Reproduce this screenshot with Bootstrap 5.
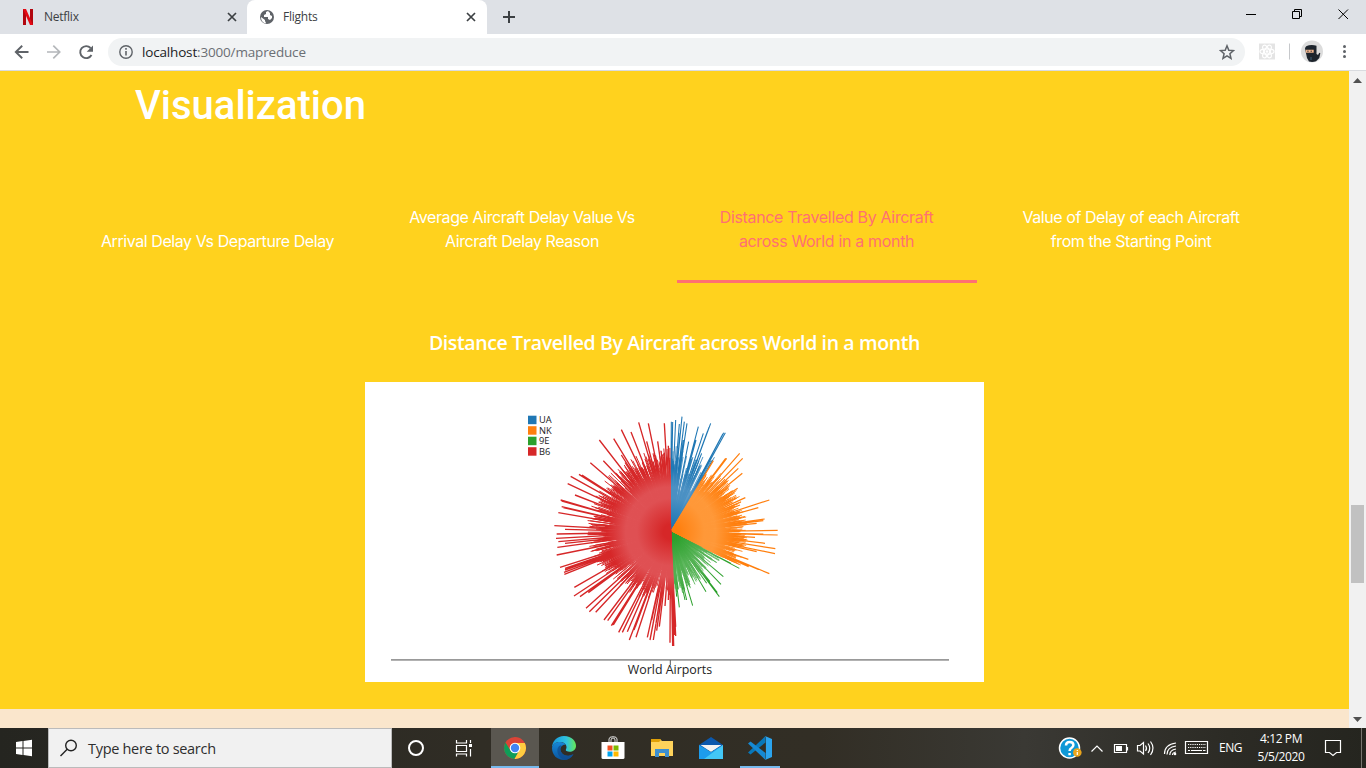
<!DOCTYPE html>
<html lang="en">
<head>
<meta charset="utf-8">
<meta name="viewport" content="width=device-width, initial-scale=1">
<title>Flights</title>
<link rel="stylesheet" href="https://cdn.jsdelivr.net/npm/bootstrap@5.3.0/dist/css/bootstrap.min.css">
<style>
  body { height: 768px; overflow: hidden; font-family: "Open Sans", "Noto Sans", sans-serif; font-size: 12px; color: #3c4043; }
  svg { display: block; flex: none; }
  .strip { height: 34px; background: #dee1e6; }
  .tab { width: 247px; height: 34px; padding: 0 9px 0 20px; line-height: 34px; }
  .tab.on { width: 240px; background: #fff; border-radius: 8px 8px 0 0; padding: 0 10px 0 12px; }
  .tab span { font-size: 12px; letter-spacing: -.25px; }
  .win svg { width: 46px; height: 29px; }
  .tools { height: 37px; background: #fff; border-bottom: 1px solid #d9dbdf; padding-bottom: 1px; }
  .omni { width: 1137px; height: 28px; margin-left: 12px; border-radius: 14px; background: #f1f3f4; padding: 0 10px; color: #6b6f74; font-size: 13.5px; letter-spacing: -.17px; }
  .omni div { padding-top: 1px; }
  .omni b { font-weight: 400; color: #202124; }
  .view { height: 657px; }
  .page { width: 1349px; background: #fae6cc; }
  .sheet { height: 638px; background: #ffd21e; color: #fff; }
  .sheet h1 { font: 500 40px/48px Roboto, sans-serif; margin: 0 0 0 135px; padding-top: 11px; }
  .choices { width: 1218px; margin: 72px 0 0 65px; height: 81px; font: 16px/24px Inter, sans-serif; }
  .choices > div { width: 304.5px; padding: 0 2px 0 2.6px; text-align: center; white-space: nowrap; }
  .choices a { display: block; color: #fff; text-decoration: none; padding-bottom: 27px; border-bottom: 3px solid transparent; letter-spacing: -.43px; }
  .choices a.on { color: #ff7072; border-color: #ff7072; letter-spacing: -.33px; }
  .sheet h2 { font: 600 19.5px/28px "Open Sans", sans-serif; margin: 46px 0 0; letter-spacing: -.38px; }
  .chartbox { width: 619px; height: 300px; margin-top: 25px; background: #fff; }
  .sbar { width: 17px; background: #f1f1f1; padding: 7px 0 6px; }
  .thumb { width: 13px; height: 78px; background: #c1c1c1; margin-top: 422px; }
  .taskbar { height: 40px; background: linear-gradient(90deg, #252520, #302d25 35%, #322e25 60%, #3a3934 75%, #2c2b25 90%, #25251f); color: #fff; }
  .start { width: 48px; height: 40px; }
  .find { width: 344px; height: 40px; background: #f1f1f1; border: 1px solid #bbb; color: #2e2e2e; padding-left: 11px; font-size: 14.5px; letter-spacing: -.3px; }
  .find span { margin-left: 10px; padding-top: 2px; }
  .app { width: 49px; height: 40px; padding-bottom: 1px; }
  .app.slim { width: 48px; }
  .app.live { background: #5a5750; width: 48px; margin-left: 3px; }
  .app.live, .app.run { box-shadow: inset 0 -2px #76b9ed; padding: 0; }
  .app.run { width: 40px; margin-left: 5px; }
  .lang { width: 23px; margin-left: 9px; letter-spacing: -.5px; }
  .clock { width: 70px; margin-left: 4px; font-size: 12px; line-height: 18px; letter-spacing: -.4px; }
</style>
</head>
<body class="d-flex flex-column">
<header>
  <div class="strip d-flex">
    <div class="tab d-flex align-items-center">
      <svg width="16" height="16" viewBox="0 0 16 16"><path d="M3 0h3v16H3zM10 0h3v16h-3z" fill="#b1060f"/><path d="M3 0h3l7 16h-3z" fill="#e50914"/></svg>
      <span class="ms-2 me-auto">Netflix</span>
      <svg width="12" height="12"><path d="m2 2 8 8m0-8-8 8" stroke="#3c4043" stroke-width="1.7"/></svg>
    </div>
    <div class="tab on d-flex align-items-center">
      <svg width="16" height="16" viewBox="0 0 16 16"><circle cx="8" cy="8" r="7" fill="#5f6368"/><path d="M9 2 7 3v2L5 6v2h4v2l2 1 2-2V7l-2-1V4l-1-1zM2 8l4 3v1l1 2-1 .5A7 7 0 0 1 2 8z" fill="#fff"/></svg>
      <span class="ms-2 me-auto">Flights</span>
      <svg width="12" height="12"><path d="m2 2 8 8m0-8-8 8" stroke="#3c4043" stroke-width="1.7"/></svg>
    </div>
    <svg class="ms-3" width="12" height="34"><path d="M6 11v12M0 17h12" stroke="#3c4043" stroke-width="2"/></svg>
    <div class="win ms-auto d-flex">
      <svg><path d="M18 14.5h10" stroke="#000"/></svg>
      <svg><path d="M18.500 11.500h7v7h-7zM20.500 11V9.500h7v7H26" fill="none" stroke="#000"/></svg>
      <svg><path d="m18.500 9.500 9.500 9.500m0-9.500-9.500 9.500" stroke="#000"/></svg>
    </div>
  </div>
  <div class="tools d-flex align-items-center">
    <svg width="96" height="34" fill="none" stroke="#5f6368" stroke-width="1.900"><path d="M28.500 17h-13m6.700-6.300L15.800 17l6.400 6.300"/><path d="M47 17h12.500M53.300 10.700 59.700 17l-6.400 6.300" stroke="#b4b7ba" stroke-width="1.700"/><path d="M91.500 20a6 6 0 1 1-.9-7"/><path d="M93 10.500v6.300h-6.300z" fill="#5f6368" stroke="none"/></svg>
    <div class="omni d-flex align-items-center">
      <svg width="16" height="16"><circle cx="8" cy="8" r="6.200" fill="none" stroke="#5f6368" stroke-width="1.400"/><path d="M8 7v4.500M8 4v1.700" stroke="#5f6368" stroke-width="1.600"/></svg>
      <div class="ms-2 me-auto"><b>localhost</b>:3000/mapreduce</div>
      <svg width="16" height="16"><path d="m8 1.800 1.800 4.400 4.700.4-3.600 3.100 1.100 4.600L8 11.800l-4 2.500 1.100-4.600-3.600-3.100 4.700-.4z" fill="none" stroke="#5f6368" stroke-width="1.500"/></svg>
    </div>
    <svg width="121" height="35">
      <path d="M14 9.500h16v16H14z" fill="#e4e4e4"/>
      <g fill="none" stroke="#fff" stroke-width="1.200"><ellipse cx="22" cy="17.500" rx="7" ry="2.700"/><ellipse cx="22" cy="17.500" rx="7" ry="2.700" transform="rotate(60 22 17.500)"/><ellipse cx="22" cy="17.500" rx="7" ry="2.700" transform="rotate(120 22 17.500)"/></g><circle cx="22" cy="17.500" r="1.300" fill="#fff"/>
      <path d="M44.500 9.500v16" stroke="#c6c8cb"/>
      <circle cx="67" cy="17.500" r="11" fill="#dcdcdc"/>
      <path d="M60 14.500q.5-2.700 4-3.300 4-.7 7.500.6V20l1.500 1 1.300-2.300 1 .5-1 4.800-3.300 3.300q-3.500 1.400-7 .3L62 24z" fill="#1d242c"/><path d="M60.700 15.700h8v3h-8z" fill="#efb48d"/><path d="M62.300 17.200h1.300m2 0h1.300" stroke="#20242a"/><path d="M66 23v3" stroke="#3f6079"/>
      <g fill="#5f6368"><circle cx="99.500" cy="12.500" r="1.500"/><circle cx="99.500" cy="17.500" r="1.500"/><circle cx="99.500" cy="22.500" r="1.500"/></g>
    </svg>
  </div>
</header>

<main class="view d-flex">
  <div class="page">
    <section class="sheet">
      <h1>Visualization</h1>
      <nav class="choices d-flex align-items-end">
        <div><a href="#">Arrival Delay Vs Departure Delay</a></div>
        <div><a href="#">Average Aircraft Delay Value Vs<br>Aircraft Delay Reason</a></div>
        <div><a class="on" href="#">Distance Travelled By Aircraft<br>across World in a month</a></div>
        <div><a href="#">Value of Delay of each Aircraft<br>from the Starting Point</a></div>
      </nav>
      <h2 class="text-center">Distance Travelled By Aircraft across World in a month</h2>
      <div class="chartbox mx-auto">
        <svg id="chart" width="619" height="300" viewBox="365 382 619 300">
          <defs></defs>
          <g id="rays" stroke-linecap="butt"></g>
          <path d="M391 659.800h558" stroke="#999" stroke-width="1.700"/><path d="M670.300 660v5" stroke="#555"/>
          <g font-family="Open Sans, sans-serif" fill="#222">
            <g font-size="9.300"><text x="539" y="423">UA</text><text x="539" y="433.700">NK</text><text x="539" y="444.200">9E</text><text x="539" y="454.700">B6</text></g>
            <text x="670" y="674" font-size="12.400" text-anchor="middle">World Airports</text>
          </g>
          <path d="M528 415.700h8.500v8.500H528z" fill="#1f77b4"/><path d="M528 426.200h8.500v8.500H528z" fill="#ff7f0e"/><path d="M528 436.700h8.500v8.500H528z" fill="#2ca02c"/><path d="M528 447.200h8.500v8.500H528z" fill="#d62728"/>
        </svg>
      </div>
    </section>
  </div>
  <div class="sbar d-flex flex-column align-items-center">
    <svg width="9" height="5"><path d="M0 5 4.500 0 9 5z" fill="#505050"/></svg>
    <div class="thumb"></div>
    <svg class="mt-auto" width="9" height="5"><path d="M0 0h9L4.500 5z" fill="#505050"/></svg>
  </div>
</main>

<footer class="taskbar d-flex align-items-center">
  <svg class="start" viewBox="0 0 48 40"><path d="m16 14 6.500-1v6.500H16zM23.500 12.900 32 11.700v7.800h-8.500zM16 20.500h6.500V27L16 26zM23.500 20.500H32v7.800l-8.500-1.200z" fill="#fff"/></svg>
  <div class="find d-flex align-items-center">
    <svg width="18" height="18" fill="none" stroke="#222" stroke-width="1.400"><circle cx="11" cy="6.500" r="5.300"/><path d="m7.200 10.300-6.700 6.700"/></svg>
    <span>Type here to search</span>
  </div>
  <div class="app slim d-flex align-items-center justify-content-center"><svg width="18" height="18"><circle cx="9" cy="9" r="7" fill="none" stroke="#fff" stroke-width="2"/></svg></div>
  <div class="app slim d-flex align-items-center justify-content-center"><svg width="18" height="18" fill="none" stroke="#fff" stroke-width="1.200"><path d="M1.500 1v3h10V1M1.500 6.500h10v6h-10zM1.500 17.500V15h10v2.500M15.500 1v3m0 6v7.500"/><path d="M14 5h3v3h-3z" fill="#fff" stroke="none"/></svg></div>
  <div class="app live d-flex align-items-center justify-content-center"><svg width="22" height="22" viewBox="0 0 22 22"><circle cx="11" cy="11" r="11" fill="#db4437"/><path d="M1.500 5.500A11 11 0 0 0 10.500 22l4.800-8.500L11 11 6.500 13.500z" fill="#0f9d58"/><path d="M10.500 22A11 11 0 0 0 20.800 6H11l4.500 7z" fill="#ffcd40"/><circle cx="11" cy="11" r="5.300" fill="#fff"/><circle cx="11" cy="11" r="4.200" fill="#4285f4"/></svg></div>
  <div class="app d-flex align-items-center justify-content-center"><svg width="24" height="24" viewBox="0 0 24 24"><defs><linearGradient id="e1"><stop stop-color="#1597dd"/><stop offset=".6" stop-color="#2fc2df"/><stop offset="1" stop-color="#66e855"/></linearGradient><linearGradient id="e2" x2="0" y2="1"><stop stop-color="#1687d8"/><stop offset="1" stop-color="#0a559d"/></linearGradient></defs><path d="M0 12C0 5 5 0 12 0c8 0 12 5.500 12 10 0 5-6 7-9.500 5-1.500-1 0-1.500 0-4 0-3-3-5-6.500-5C4 6 1 8 0 12z" fill="url(#e1)"/><path d="M0 12c1-4 4-6 8-6 3 0 5 1.500 6 3-3-1-6 2-5.500 5 .6 4 5 6.500 9 5.500 2-.4 3-1 4-1.500C19 22 16 24 12 24 5 24 0 19 0 12z" fill="url(#e2)"/><path d="M9.500 9C6 10 5 13 5.500 16c.6 4 4 7 7.500 8 4-.4 7-3 8.500-6-1 .5-2 1-4 1.500-4 1-8.400-1.500-9-5.500-.3-2 .3-3.500 1-5z" fill="#114a8b" opacity=".7"/></svg></div>
  <div class="app d-flex align-items-center justify-content-center"><svg width="24" height="24" viewBox="0 0 24 24"><path d="M8 7V3q0-2.300 4-2.300T16 3v4M10 7V4q0-2 2-2t2 2v3" fill="none" stroke="#ddd"/><path d="M.5 6h23v15.500q0 1.500-1.500 1.500H2Q.5 23 .5 21.500z" fill="#fff"/><path d="M6.500 9.500h5v5h-5z" fill="#f25022"/><path d="M12.500 9.500h5v5h-5z" fill="#7fba00"/><path d="M6.500 15.500h5v5h-5z" fill="#00a4ef"/><path d="M12.500 15.500h5v5h-5z" fill="#ffb900"/></svg></div>
  <div class="app d-flex align-items-center justify-content-center"><svg width="22" height="20" viewBox="0 0 22 20"><path d="M0 1h9l2 2h11v15H0z" fill="#ffd35b"/><path d="M0 1h9l1 1-2 2H0z" fill="#e0a008"/><path d="M4 19v-8h14v8h-4v-4H8v4z" fill="#3d8fd0"/></svg></div>
  <div class="app d-flex align-items-center justify-content-center"><svg width="24" height="24" viewBox="0 0 24 24"><path d="M0 9 12 1l12 8v5H0z" fill="#0b58ad"/><path d="M1.500 9h21L12 16z" fill="#f3f3f3"/><path d="m0 9 12 7L24 9v14H0z" fill="#1d9cec"/><path d="M24 9 5 23h19z" fill="#43c7f6"/></svg></div>
  <div class="app run d-flex align-items-center justify-content-center"><svg width="24" height="24" viewBox="0 0 24 24"><path d="M17.500 0v6.500L2.500 18.500 0 16.500z" fill="#0877b9"/><path d="m0 7.500 2.500-2L17.500 17v7z" fill="#1689d3"/><path d="m17 0 7 3v18l-7 3q.9-.5.900-2V2q0-1.500-.9-2z" fill="#2ba4ee"/></svg></div>

  <div class="ms-auto d-flex align-items-center">
    <svg width="152" height="40" viewBox="1058 728 152 40" fill="none" stroke="#fff" stroke-width="1.200">
      <circle cx="1069.500" cy="748" r="10" fill="#0e98d6" stroke-width="1.500"/><path d="M1066 745.500q0-3.500 3.700-3.500t3.700 3q0 1.700-2 3-1.800 1.100-1.800 3M1069.600 753v2.300" stroke-width="2.500"/>
      <circle cx="1077.300" cy="752.500" r="4.300" fill="#eba51c" stroke="none"/><path d="M1077.300 750v1m0 1v3"/>
      <path d="m1091.500 751.500 5.500-5.500 5.500 5.500"/>
      <path d="M1114.500 744.500h12v8h-12zM1127.500 747v3.500"/><path d="M1116 746h6v5h-6z" fill="#fff" stroke="none"/>
      <path d="M1137.500 745.500h2.500l3.500-3v11.500l-3.500-3h-2.500zM1145.500 745.500q2 3 0 5.500M1148 743.500q3.600 5 0 9.500M1150.500 741.500q5 6.700 0 13.500"/>
      <path d="M1164.500 754q0-9.500 11.500-11M1167 754.500q0-7.300 9-8.500M1169.800 755q0-5 6.200-6M1172.500 755q0-2.500 3.500-3"/><circle cx="1175" cy="754" r="1.300" fill="#fff" stroke="none"/>
      <path d="M1185.500 741.500h22v12h-22z"/><path d="M1188 744.500h18m-18 3h18" stroke-dasharray="1.200 1"/><path d="M1188 750.500h2m1 0h11m1 0h2.500"/>
    </svg>
    <span class="lang">ENG</span>
    <div class="clock text-center"><div>4:12 PM</div><div>5/5/2020</div></div>
    <svg class="ms-0" width="50" height="40"><path d="M9.500 12.500h15v12h-4l-3.500 3-3.500-3h-4z" fill="none" stroke="#fff" stroke-width="1.200"/><path d="M45.500 0v40" stroke="#77756f"/></svg>
  </div>
</footer>

<script>
// Radial chart: each carrier owns a sector of thin rays whose length is the distance flown.
const carriers = [
  {id:'UA', color:'#1f77b4', light:'#4a90c3', from:0, to:31, w:.8, step:.65, base:a=>175, spread:65, extra:26, reach:100,
   tips:'484,65 488,66 484,138 497,60 516,50 523,65 531,70 508,72 510,100 536,125 520,120 565,80 558,120 580,100 602,70 597,82 592,95 560,180 575,160 646,98 641,98 638,103 634,110 632,115 608,180'},
  {id:'NK', color:'#ff7f0e', light:'#ff9838', from:31, to:116, w:.9, step:.45, base:a=>a<40?175:192, spread:32, extra:110, reach:42,
   tips:'610,182 650,175 647,175 645,180 689,160 698,175 685,205 697,220 652,242 683,265 706,293 778,300 745,323 690,315 764,357 760,362 740,370 730,363 803,391 803,405 760,402 735,412 765,430 796,446 795,461 740,455 715,478 778,521 745,508 716,500'},
  {id:'9E', color:'#2ca02c', light:'#51b151', from:116, to:177, w:.75, step:.65, base:a=>a<155?122:140, spread:32, extra:50, reach:48,
   tips:'688,505 663,490 640,530 620,488 633,553 628,590 622,578 588,575 600,545 590,550 548,617 530,600 525,600 508,622 500,590 505,568'},
  {id:'B6', color:'#d62728', light:'#df5053', from:177, to:360, w:1, step:.6, base:a=>a<255?140+(a-177)*.65:195, spread:40, extra:270, reach:58,
   tips:'497,708 491,738 488,738 490,738 480,728 494,705 497,680 465,618 475,600 448,680 440,692 430,720 420,720 412,712 438,670 425,660 378,712 372,690 376,680 358,720 352,695 337,697 326,697 310,675 304,677 307,675 293,662 282,660 257,637 238,635 228,625 210,590 192,588 235,578 193,562 163,523 162,517 165,510 150,502 165,505 140,465 142,442 165,430 145,425 138,415 140,402 165,388 133,377 145,338 155,320 160,323 152,300 154,302 156,303 195,285 173,251 182,229 207,223 216,225 241,188 280,182 268,120 311,116 334,89 363,96 386,67 415,70 410,124 443,124 334,165 463,70 461,160 475,137'}
];
let seed = 17;
const rnd = () => (seed = (seed * 16807) % 2147483647) / 2147483647;
const cx = 670.6, cy = 532;
let defs = '', out = '';
for (const c of carriers) {
  defs += `<radialGradient id="g${c.id}" gradientUnits="userSpaceOnUse" cx="${cx}" cy="${cy}" r="75"><stop stop-color="${c.color}"/><stop offset=".1" stop-color="${c.color}"/><stop offset=".45" stop-color="${c.light}"/><stop offset=".6" stop-color="${c.light}"/><stop offset=".85" stop-color="${c.color}"/></radialGradient>`;
  let d = '';
  const ray = (a, r) => { const t = a * Math.PI / 180; d += `M${cx} ${cy}L${(cx + Math.sin(t) * r / 3).toFixed(2)} ${(cy - Math.cos(t) * r / 3).toFixed(2)}`; };
  for (let a = c.from + .3; a < c.to; a += c.step) ray(a, c.base(a) + (rnd() * 2 - 1) * c.spread);
  for (let i = 0; i < c.extra; i++) { const a = c.from + .5 + rnd() * (c.to - c.from - 1); ray(a, c.base(a) + rnd() * c.reach); }
  let long = '';
  for (const t of c.tips.split(' ')) { const [x, y] = t.split(',').map(Number); long += `M${cx} ${cy}L${510 + x / 3} ${400 + y / 3}`; }
  out += `<path d="${d}" stroke="url(#g${c.id})" stroke-width="${c.w}"/><path d="${long}" stroke="url(#g${c.id})" stroke-width="${c.w * 1.35}"/>`;
}
document.querySelector('#chart defs').innerHTML = defs;
document.getElementById('rays').innerHTML = out;
</script>
<script src="https://cdn.jsdelivr.net/npm/bootstrap@5.3.0/dist/js/bootstrap.bundle.min.js"></script>
</body>
</html>
